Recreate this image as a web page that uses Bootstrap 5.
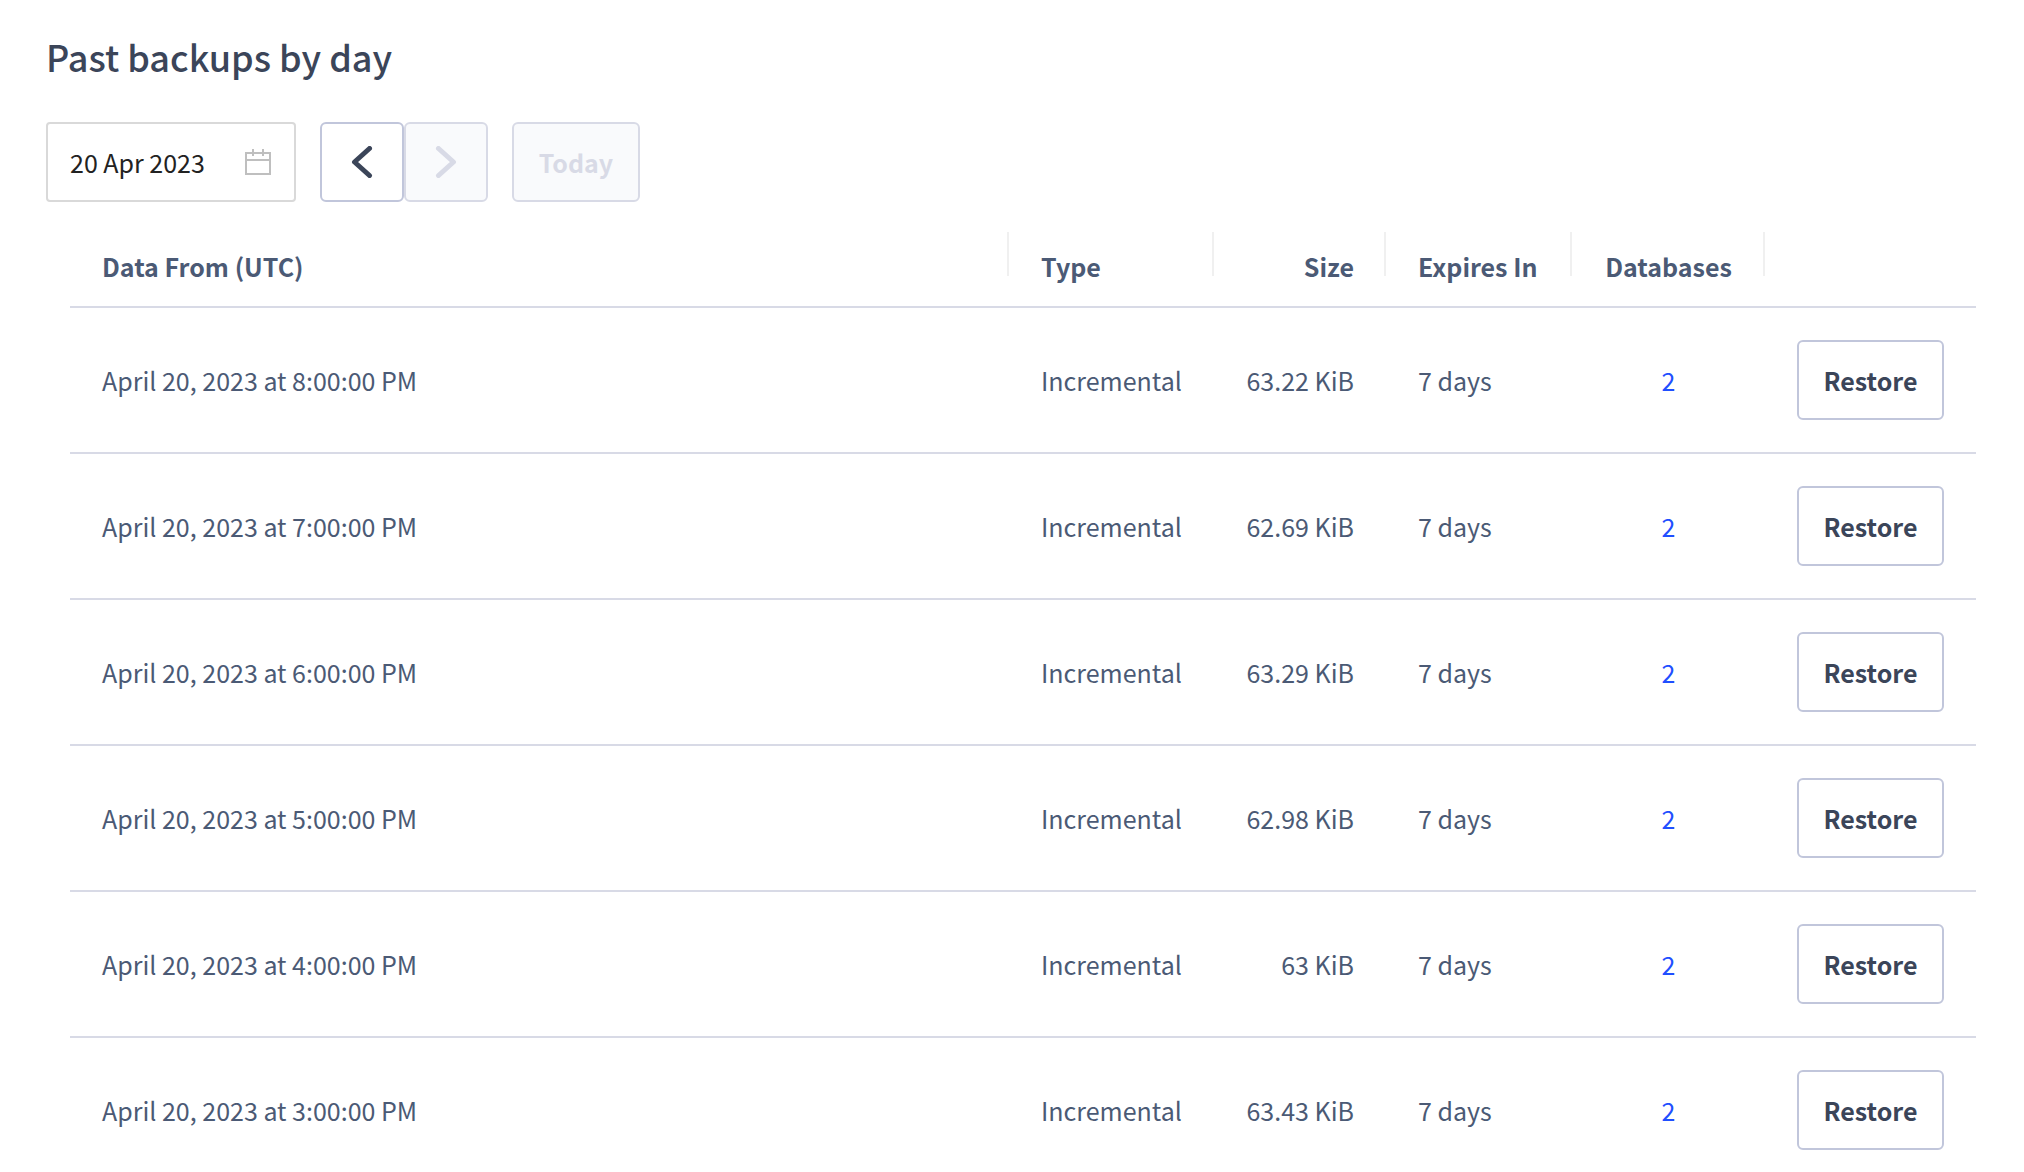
<!DOCTYPE html>
<html lang="en">
<head>
<meta charset="utf-8">
<meta name="viewport" content="width=device-width, initial-scale=1">
<title>Past backups by day</title>
<link href="https://cdn.jsdelivr.net/npm/bootstrap@5.3.0/dist/css/bootstrap.min.css" rel="stylesheet">
<style>
  body { font-family: "Noto Sans CJK SC", "Noto Sans", sans-serif; font-size: 25px; line-height: 44px; color: #4b5a75; background: #fff; }
  .page-wrap { padding: 30px 48px 0 46px; }
  .page-title { font-size: 36px; line-height: 52px; font-weight: 500; color: #3b4559; margin-bottom: 40px; }
  .date-box { width: 250px; height: 80px; border: 2px solid #d9d9d9; border-radius: 4px; padding: 0 23px 0 22px; }
  .date-box input { font-size: 25px; color: #222; line-height: 44px; box-shadow: none; }
  .date-box svg { width: 26px; height: 28px; flex: none; }
  .btn-tool { --bs-btn-font-size: 25px; --bs-btn-font-weight: 700; --bs-btn-line-height: 44px; --bs-btn-padding-x: 0; --bs-btn-padding-y: 0;
    --bs-btn-color: #3b4559; --bs-btn-bg: #fff; --bs-btn-border-color: #c1c6db; --bs-btn-border-width: 2px; --bs-btn-border-radius: 6px;
    --bs-btn-hover-bg: #f8f9fc; --bs-btn-hover-color: #3b4559; --bs-btn-hover-border-color: #c1c6db;
    --bs-btn-disabled-color: #d8dae6; --bs-btn-disabled-bg: #f9fafc; --bs-btn-disabled-border-color: #d8dae6; --bs-btn-disabled-opacity: 1; height: 80px; }
  .btn-step { width: 84px; }
  .btn-step svg { width: 22px; height: 32px; }
  .btn-today { width: 128px; }
  .btn-restore { width: 147px; }
  .table-wrap { padding-left: 24px; }
  .backup-table { --bs-table-color: #4b5a75; --bs-table-bg: transparent; color: #4b5a75; table-layout: fixed; border-collapse: separate; border-spacing: 0; }
  .backup-table > :not(caption) > * > * { border-bottom: 2px solid #d8dae6; padding: 0 32px; white-space: nowrap; }
  .backup-table thead th { position: relative; height: 106px; padding-bottom: 18px; vertical-align: bottom; font-weight: 700; }
  .backup-table thead th:not(:last-child)::after { content: ""; position: absolute; right: 0; top: 30px; width: 2px; height: 44px; background: #f0f0f0; }
  .backup-table tbody td { height: 146px; vertical-align: middle; }
  .backup-table a { color: #1f4fff; }
  .col-type { width: 205px; }
  .col-size { width: 172px; }
  .col-expires { width: 186px; }
  .col-dbs { width: 193px; }
  .col-action { width: 211px; }
</style>
<script src="https://cdn.jsdelivr.net/npm/bootstrap@5.3.0/dist/js/bootstrap.bundle.min.js"></script>
</head>
<body>
<main class="page-wrap">
  <h1 class="page-title">Past backups by day</h1>
  <div class="d-flex align-items-center gap-4">
    <label class="date-box d-flex align-items-center" for="backupDate">
      <input id="backupDate" type="text" class="form-control border-0 p-0 bg-transparent" value="20 Apr 2023" aria-label="Backup date">
      <svg viewBox="0 0 26 28" fill="none" stroke="#bfbfbf" stroke-width="2" aria-hidden="true"><path d="M1 5H25V26H1ZM1 12H25M8 1V8M18 1V8"/></svg>
    </label>
    <div class="d-flex">
      <button type="button" class="btn btn-tool btn-step d-flex align-items-center justify-content-center" aria-label="Previous day"><svg viewBox="0 0 22 32" fill="none" stroke="currentColor" stroke-width="5" stroke-linecap="round" stroke-linejoin="round" aria-hidden="true"><path d="M18.500 2.500L3.500 16L18.500 29.500"/></svg></button>
      <button type="button" class="btn btn-tool btn-step d-flex align-items-center justify-content-center" aria-label="Next day" disabled><svg viewBox="0 0 22 32" fill="none" stroke="currentColor" stroke-width="5" stroke-linecap="round" stroke-linejoin="round" aria-hidden="true"><path d="M3.500 2.500L18.500 16L3.500 29.500"/></svg></button>
    </div>
    <button type="button" class="btn btn-tool btn-today" disabled>Today</button>
  </div>
  <div class="table-wrap">
    <table class="table backup-table mb-0">
      <colgroup><col><col class="col-type"><col class="col-size"><col class="col-expires"><col class="col-dbs"><col class="col-action"></colgroup>
      <thead>
        <tr><th scope="col">Data From (UTC)</th><th scope="col">Type</th><th scope="col" class="text-end">Size</th><th scope="col">Expires In</th><th scope="col" class="text-center px-0">Databases</th><th scope="col" aria-label="Actions"></th></tr>
      </thead>
      <tbody>
        <tr><td>April 20, 2023 at 8:00:00 PM</td><td>Incremental</td><td class="text-end">63.22 KiB</td><td>7 days</td><td class="text-center"><a href="#" class="text-decoration-none">2</a></td><td><button type="button" class="btn btn-tool btn-restore">Restore</button></td></tr>
        <tr><td>April 20, 2023 at 7:00:00 PM</td><td>Incremental</td><td class="text-end">62.69 KiB</td><td>7 days</td><td class="text-center"><a href="#" class="text-decoration-none">2</a></td><td><button type="button" class="btn btn-tool btn-restore">Restore</button></td></tr>
        <tr><td>April 20, 2023 at 6:00:00 PM</td><td>Incremental</td><td class="text-end">63.29 KiB</td><td>7 days</td><td class="text-center"><a href="#" class="text-decoration-none">2</a></td><td><button type="button" class="btn btn-tool btn-restore">Restore</button></td></tr>
        <tr><td>April 20, 2023 at 5:00:00 PM</td><td>Incremental</td><td class="text-end">62.98 KiB</td><td>7 days</td><td class="text-center"><a href="#" class="text-decoration-none">2</a></td><td><button type="button" class="btn btn-tool btn-restore">Restore</button></td></tr>
        <tr><td>April 20, 2023 at 4:00:00 PM</td><td>Incremental</td><td class="text-end">63 KiB</td><td>7 days</td><td class="text-center"><a href="#" class="text-decoration-none">2</a></td><td><button type="button" class="btn btn-tool btn-restore">Restore</button></td></tr>
        <tr><td>April 20, 2023 at 3:00:00 PM</td><td>Incremental</td><td class="text-end">63.43 KiB</td><td>7 days</td><td class="text-center"><a href="#" class="text-decoration-none">2</a></td><td><button type="button" class="btn btn-tool btn-restore">Restore</button></td></tr>
      </tbody>
    </table>
  </div>
</main>
</body>
</html>
